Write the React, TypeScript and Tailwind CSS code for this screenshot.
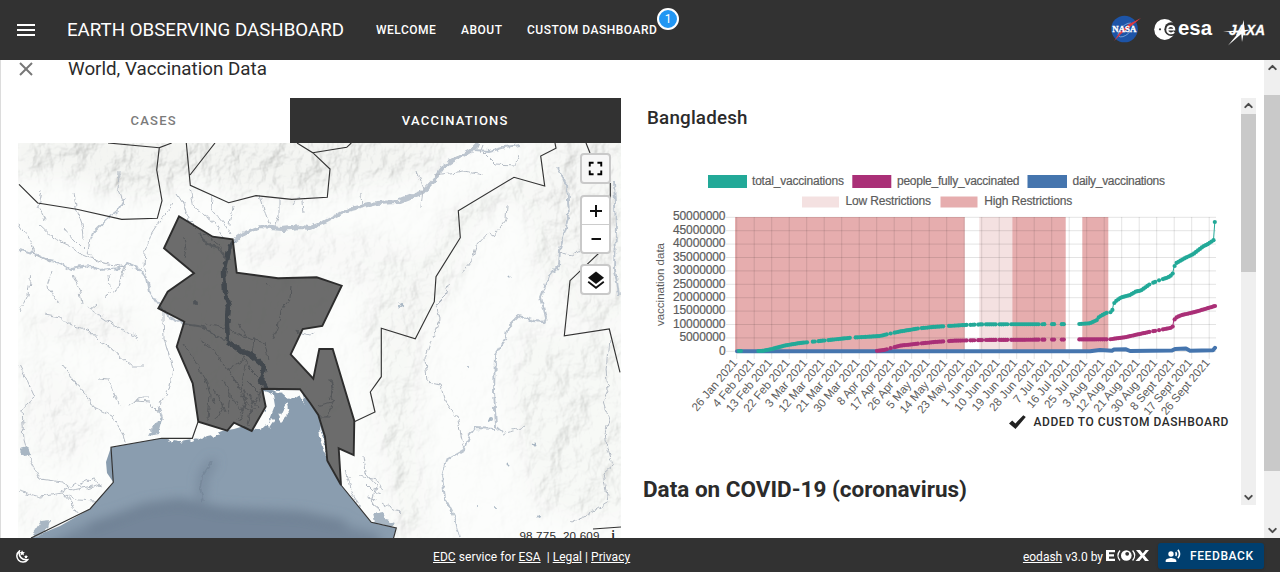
import { ReactNode } from "react";
import { X, ChevronUp, ChevronDown } from "lucide-react";
import { MdFullscreen, MdRecordVoiceOver } from "react-icons/md";

type Point = [number, number];

const COUNTRY =
  "M179 216.3 212.7 236.7 232.7 239.3 236.7 272.7 278 278.3 316.7 277.3 341.7 285.7 322.3 326 302.7 329 290.7 354.3 313.3 378.7 319.3 349 332.7 349 354.3 421 353.7 455 338.7 448.3 341 485 327.3 460.7 325 436.7 318.3 415 310 402.7 300 389.3 262 388.7 265.7 406.7 251.7 431 234 422.7 227.3 430.7 198.3 421.7 192.7 383.3 176.7 346.7 184.3 321.7 158.3 308.3 167.7 291.7 194 273.3 164 248.3Z";

const BORDERS = [
  "M19 184.3 37.7 203 76.7 209.3 121.7 219.3 157.3 218.3 162 200.7 156.7 170 159.3 147.7 171.7 143M108 143 159.3 147.7",
  "M186.3 143 190.3 185.3 228.7 202.7 256 195.7 291.7 199.3 327.3 197.3 330 169 312.7 152.7 297 143M215 143 190 175M312.7 152.7 346.7 147.3 351.3 143",
  "M555 143 556 148.3 540.7 156 544.7 186 514 177.3 458.3 210.7 460.3 237.7 436 276.7 434.3 301.7 415.3 338.7 381.3 328.3 381.3 376.7 370.3 392 375 412 354.3 421.7",
  "M586 143 590 153M610.3 183V241.7L598.7 253.3 570 280.7 564.3 335.7 609.3 329 620 372.3",
  "M198 422 192.3 438.3 161.7 438.3 111 447.3 113.3 482.3 90 509 31 538",
  "M341 485 371.3 522.3 396.3 528 393.3 539M593 529 621 527",
];

const WIDE_RIVERS = [
  "M478 143 472 150 456 159 443 167 434 180 423 192 398 202 377 203 347 210 325 222 310 228 300 227 282 229 260 227 245 233 234 240 230 246 224 273 225 292 229 307 227 325 228 342 240 350 254 357 264 366 261 380 266 389",
];
const MID_RIVERS = [
  "M19 250 33 253 50 261 60 263 70 269 90 266 100 270 120 268 127 264 139 269 147 278 150 292 158 304 170 318 185 324 203 327 220 338 228 342",
  "M473 150 490 151 505 147 520 145M125 198 118 211 106 220 95 231 90 238",
  "M505 340 495 355 494 392 496 426 503 432M496 429 475 428 470 435 465 449 446 460 442 476 445 498 455 518 460 538",
  "M505 340 508 327 519 316 535 321 544 322 546 318 541 297 549 276 559 265 560 250 569 215 567 185 557 168",
  "M614 180 616 230 615 270 619 295",
  "M200 233 206 243 218 248 226 260M150 430 162 418 159 408",
];
const RIVERS = [
  "M41 190 38 207 45 220M74 193 76 207 83 228 84 239M119 172 118 190 124 205M90 238 88 252 94 260 109 264 126 267M173 203 162 218 151 235 145 252 144 266 148 280",
  "M19 224 31 243 34 254 50 262M39 224 55 239 70 246 80 254 95 260M64 228 74 240 84 250",
  "M177 194 184 205 188 219 197 228M190 188 194 208 214 222 224 238M212 197 211 208 224 224 231 235M233 207 230 225M260 195 264 210 270 225M279 198 279 215 275 226M303 200 304 214M293 205 299 196",
  "M52 272 47 286 56 300 60 303M31 275 28 294 20 311M73 275 80 292 82 304M125 267 119 287 104 296M97 304 90 310M109 275 110 288M44 315 60 318 72 325 90 331 98 340M87 307 102 317 118 328 138 338",
  "M163 308 163 318 164 338 173 369 169 390 160 403 158 413 152 407 150 401 135 400M100 341 113 350 132 366 145 366M62 365 80 388 94 407 112 416 122 432 125 442M99 378 108 379 115 397 119 405M129 404 142 397 148 397M19 365 28 382 35 398 22 409 24 440 29 457 40 479 62 482 72 490 92 486",
  "M19 491 40 497 62 493 78 500 96 501M62 492 76 483 88 489 101 485M80 483 94 478 100 487M64 494 72 503 77 514",
  "M421 206 423 190 416 171M434 175 450 173 463 171 483 175M483 152 495 164 515 165 519 155M361 194 362 208",
  "M507 206 506 220 494 236 488 232 477 244 471 262 461 274M449 283 445 296 436 305 440 319 432 337",
  "M431 340 425 359 427 381 440 384 445 401 457 417 462 440 465 448M560 251 571 255 580 250",
  "M609 340 606 370 608 390 603 401 609 420 605 433 607 447 613 465 603 474 608 502 588 515 571 523M503 434 516 430 524 426M480 153 483 145",
  "M272 340 278 328 281 310 290 299 291 285M266 282 271 288M296 331 310 335 315 332M184 237 186 249 184 259M204 233 220 246 225 258",
  "M184 344 195 362 205 379 210 394 208 421M200 340 214 350 228 370 240 389 245 403 238 420M245 365 241 388 249 395 257 407M222 379 230 394 228 414M228 370 241 362 247 350M262 388 252 407 248 425M214 389 223 405 216 418M206 324 229 329 243 337 265 343 268 360M239 323 247 338M254 337 252 356M317 406 333 402 331 378M319 417 330 417M326 417 334 401",
  "M346 470 353 495 361 508M363 456 365 473 376 485 372 503 380 510M360 476 377 480 382 490M382 502 393 510 401 512M243 390 246 402 256 410M241 354 250 369 262 381M233 374 239 389",
  "M240 395 247 398 244 408 252 412M236 401 243 412 240 422M249 383 258 392 260 402M330 380 334 390 330 398 335 402M212 398 216 405M222 402 225 412M231 396 236 406M366 484 374 492 381 494M368 498 376 500",
];

const SEA =
  "M31 538 60 526 90 509 113.3 482.3 107 473 106 462 111 447.3 161.7 438.3 180 441 198 438 212 435 222 431 234 429 244 426 252 430 258 425 264 414 266 405 262 389 300 389 318 415 325 437 327 461 341 485 371 522 396 528 393 540Z";

const LAND_PATCHES = [
  "M265 391 273 394 275 406 268 424 259 430 253 428 264 411Z",
  "M271 390 302 390 305 404 299 394 290 400 282 393Z",
  "M287 403 289 414 281 422 278 419 283 409Z",
  "M198 422 207 426 217 429 214 438 207 432 199 440 196 434 192 438Z",
  "M162 438 168 438 171 443 176 438 181 443 185 438 192 442 195 437 203 439 209 434 220 435 212 425 198 422 185 429 168 429Z",
  "M319 426 324 441 328 461 323 450 320 438Z",
  "M268 424 272 418 275 421 269 430Z",
];

const MOUNTAINS: ReactNode = (
  <>
    <path d="M10 130H330L400 130 430 165 360 185 330 195 240 195 190 175 160 195 120 195 70 175 10 178Z" />
    <path d="M395 130H470L430 170 395 185 330 185 330 150Z" opacity=".8" />
    <path d="M520 130H630V320H570L555 265 535 290 530 210 500 200 470 235 445 300 405 350 380 310 425 260 455 205 540 165Z" opacity=".7" />
    <path d="M360 310 420 330 420 440 430 538H400L375 430Z" opacity=".6" />
    <path d="M520 330H630V520H570L530 500 510 400Z" opacity=".6" />
    <path d="M235 240 320 230 400 240 430 260 380 310 340 275 280 270 245 265Z" opacity=".45" />
    <path d="M25 365 65 365 98 420 85 465 45 465 22 430ZM20 320 90 300 150 325 130 350 40 340ZM18 500 60 505 40 530H18Z" opacity=".4" />
  </>
);

function MapView() {
  return (
    <svg viewBox="18 143 603 395" className="absolute inset-0 h-full w-full">
      <defs>
        <filter id="relief" x="0" y="0" width="100%" height="100%">
          <feTurbulence type="fractalNoise" baseFrequency="0.035 0.028" numOctaves="5" seed="8" />
          <feDiffuseLighting lightingColor="#ffffff" surfaceScale="9" diffuseConstant="1.08">
            <feDistantLight azimuth="215" elevation="60" />
          </feDiffuseLighting>
          <feColorMatrix values=".33 .33 .33 0 0 .33 .33 .33 0 0 .33 .33 .33 0 0 0 0 0 1 0" />
        </filter>
        <filter id="soft" x="-20%" y="-20%" width="140%" height="140%">
          <feGaussianBlur stdDeviation="10" />
        </filter>
        <filter id="blur" x="-20%" y="-40%" width="140%" height="180%">
          <feGaussianBlur stdDeviation="6" />
        </filter>
        <filter id="wiggle" x="-5%" y="-5%" width="110%" height="110%">
          <feTurbulence type="fractalNoise" baseFrequency="0.16" numOctaves="2" seed="3" />
          <feDisplacementMap in="SourceGraphic" scale="6" xChannelSelector="R" yChannelSelector="G" />
        </filter>
        <mask id="hills" maskUnits="userSpaceOnUse" x="18" y="143" width="603" height="395">
          <rect x="18" y="143" width="603" height="395" fill="#fff" opacity=".09" />
          <g fill="#fff" filter="url(#soft)">{MOUNTAINS}</g>
        </mask>
        <clipPath id="sea">
          <path d={SEA} />
        </clipPath>
      </defs>
      <rect x="18" y="143" width="603" height="395" fill="#fdfefd" />
      <g mask="url(#hills)">
        <rect x="18" y="143" width="603" height="395" fill="#eef0ec" />
        <rect x="18" y="143" width="603" height="395" filter="url(#relief)" opacity=".38" />
      </g>
      <path d={SEA} fill="#8a9daf" />
      <g clipPath="url(#sea)">
        <g filter="url(#blur)" fill="none">
          <path d="M45 545 90 523 145 506 185 501 240 512 320 518 380 535 380 560 45 560Z" fill="#74869a" />
          <path d="M214 460 203 475 201 500" stroke="#6c7d90" strokeWidth="5" />
          <path d="M90 528 145 507 180 502 220 511 300 515 345 524" stroke="#66778a" strokeWidth="5" />
        </g>
        <path d="M212 461 202 477 200 488 203 501" fill="none" stroke="#6c7c8f" strokeWidth="1.6" opacity=".45" filter="url(#wiggle)" />
      </g>
      <g fill="#fbfcfb" filter="url(#wiggle)">
        {LAND_PATCHES.map((d) => (
          <path key={d} d={d} />
        ))}
      </g>
      <g fill="none" stroke="#bcc5cf" strokeLinejoin="round" filter="url(#wiggle)">
        {WIDE_RIVERS.map((d) => (
          <path key={d} d={d} strokeWidth="4" />
        ))}
        {MID_RIVERS.map((d) => (
          <path key={d} d={d} strokeWidth="1.9" />
        ))}
        {RIVERS.map((d) => (
          <path key={d} d={d} strokeWidth="1" stroke="#b5bcc5" />
        ))}
        <path d="M234 241 230 246 224 273 225 292 229 307 227 325 228 342 240 350 254 357 264 366 261 380 266 389" strokeWidth="4.5" stroke="#8596a6" />
      </g>
      <g fill="#a8b6c3" filter="url(#wiggle)">
        <path d="M20 449 28 447 31 455 24 456ZM33 533 41 521 50 520 48 528 36 538ZM372 514 383 512 386 520 396 523 390 528 374 522ZM148 436 157 420 162 418 158 434Z" />
        <circle cx="401" cy="305" r="2" />
        <circle cx="491" cy="420" r="2" />
        <circle cx="534" cy="444" r="1.5" />
        <circle cx="509" cy="464" r="1.5" />
        <circle cx="538" cy="516" r="2" />
        <circle cx="196" cy="304" r="2" />
        <circle cx="510" cy="277" r="1.5" />
        <circle cx="468" cy="366" r="1" />
        <circle cx="495" cy="507" r="1" />
        <circle cx="478" cy="507" r="1" />
      </g>
      <g fill="none" stroke="#333" strokeWidth="1.15">
        {BORDERS.map((d) => (
          <path key={d} d={d} />
        ))}
      </g>
      <path d={COUNTRY} fill="#1e1e1e" fillOpacity=".65" stroke="#2d2d2d" strokeWidth="1.9" />
    </svg>
  );
}

const LABELS = [
  "26 Jan", "4 Feb", "13 Feb", "22 Feb", "3 Mar", "12 Mar", "21 Mar", "30 Mar", "8 Apr", "17 Apr",
  "26 Apr", "5 May", "14 May", "23 May", "1 Jun", "10 Jun", "19 Jun", "28 Jun", "7 Jul", "16 Jul",
  "25 Jul", "3 Aug", "12 Aug", "21 Aug", "30 Aug", "8 Sept", "17 Sept", "26 Sept",
];

const TOTAL: Point[] = [
  [737, 351], [762, 351], [772, 349], [785, 345.5], [800, 343], [820, 341], [850, 337.8], [880, 336],
  [886, 334.5], [900, 331.5], [918, 328.5], [935, 326.8], [965, 325], [985, 324.3], [1063, 324.2],
  [1079, 324], [1090, 323.3], [1097, 320], [1099, 317], [1106, 313], [1112, 312], [1113.5, 304],
  [1116, 301], [1121, 297.5], [1130, 295], [1136, 291.5], [1141, 290.5], [1150, 284], [1160, 280],
  [1168, 277.5], [1172.5, 274.5], [1174, 267], [1176.5, 263], [1185, 258], [1193, 254.3],
  [1203, 246.5], [1208, 244], [1213.8, 240], [1214.8, 222],
];
const FULL: Point[] = [
  [876, 351], [884, 350], [900, 345.7], [915, 344], [935, 342], [955, 340.7], [985, 340], [1110, 339.3],
  [1125, 337.3], [1136, 334.8], [1150, 331.8], [1160, 330], [1172.5, 327.5], [1174, 320], [1177, 317],
  [1182, 315], [1195, 312], [1205, 309], [1215, 306],
];
const DAILY: Point[] = [
  [737, 351.3], [1090, 351.3], [1100, 350], [1112, 350.7], [1114, 349.5], [1126, 349.3], [1130, 351],
  [1172, 350.6], [1175, 349], [1186, 348.6], [1190, 350.7], [1213, 350.2], [1215, 347.8],
];
const GAPS: Point[] = [
  [742, 758], [808, 811.5], [815, 818], [825, 828], [851.5, 855], [887, 889], [892, 894], [918.5, 921],
  [944, 948.5], [968, 970], [975, 976.5], [983, 985], [996, 998], [1009, 1011], [1039, 1042],
  [1045, 1047], [1048, 1052], [1054.5, 1061], [1064, 1078], [1107, 1109.5], [1149.5, 1153],
  [1156, 1157.5], [1161, 1162.5], [1177, 1178.5],
];

function sample(series: Point[]): Point[] {
  const out: Point[] = [];
  for (let x = 737; x <= 1213.8; x += 1.945) {
    if (GAPS.some(([a, b]) => x > a && x < b)) continue;
    const i = series.findIndex((p) => p[0] >= x);
    if (i <= 0) continue;
    const [a, b] = [series[i - 1], series[i]];
    out.push([x, a[1] + ((b[1] - a[1]) * (x - a[0])) / (b[0] - a[0])]);
  }
  out.push(series[series.length - 1]);
  return out;
}

function Series({ data, color }: { data: Point[]; color: string }) {
  return (
    <g fill={color}>
      {sample(data).map(([x, y]) => (
        <circle key={x} cx={x} cy={y} r="2.1" />
      ))}
    </g>
  );
}

const LEGEND = [
  { x: 708, y: 175, w: 39, h: 13, color: "#22a998", tx: 752, ty: 184.5, tw: 92, text: "total_vaccinations" },
  { x: 852.3, y: 175, w: 39, h: 13, color: "#aa2f77", tx: 897, ty: 184.5, tw: 122.5, text: "people_fully_vaccinated" },
  { x: 1027.5, y: 175, w: 39.5, h: 13, color: "#4575ae", tx: 1072.5, ty: 184.5, tw: 92.5, text: "daily_vaccinations" },
  { x: 802, y: 196.5, w: 37, h: 11, color: "#f4e1e1", tx: 845.5, ty: 205, tw: 85.5, text: "Low Restrictions" },
  { x: 940.5, y: 196.5, w: 37, h: 11, color: "#e6adae", tx: 984.3, ty: 205, tw: 88, text: "High Restrictions" },
];

function Chart() {
  return (
    <svg viewBox="643 165 585 247" className="block h-[247px] w-[585px] overflow-visible" fontFamily="Liberation Sans, Arial, sans-serif" fontSize="12" fill="#5c5c5c">
      {LEGEND.map((l) => (
        <g key={l.text}>
          <rect x={l.x} y={l.y} width={l.w} height={l.h} fill={l.color} />
          <text x={l.tx} y={l.ty} textLength={l.tw} stroke="#5c5c5c" strokeWidth=".2">{l.text}</text>
        </g>
      ))}
      <rect x="735" y="217" width="229.7" height="134.3" fill="#e6adae" />
      <rect x="979.3" y="217" width="33" height="134.3" fill="#f4e1e1" />
      <rect x="1012.3" y="217" width="53.4" height="134.3" fill="#e6adae" />
      <rect x="1082.3" y="217" width="26" height="134.3" fill="#e6adae" />
      <g stroke="#000" strokeOpacity=".11">
        {Array.from({ length: 11 }, (_, i) => (
          <path key={i} d={`M726 ${217.3 + i * 13.4}H1216`} />
        ))}
        {LABELS.map((l, i) => (
          <path key={l} d={`M${736.7 + i * 17.5} 217V359`} />
        ))}
      </g>
      {Array.from({ length: 11 }, (_, i) => (
        <text key={i} x={i === 10 ? 719 : i === 9 ? 679.5 : 673} y={220.3 + i * 13.45} textLength={i === 10 ? 6.5 : i === 9 ? 46 : 52.5} stroke="#5c5c5c" strokeWidth=".2">
          {String(50000000 - i * 5000000)}
        </text>
      ))}
      <text transform="translate(663.5 326) rotate(-90)" textLength="83" fontSize="11.5">vaccination data</text>
      {LABELS.map((l, i) => (
        <text key={l} transform={`translate(${738 + i * 17.5} 363) rotate(-50)`} textAnchor="end" fontSize="11.6">
          {l + " 2021"}
        </text>
      ))}
      <path d={"M" + DAILY.map((p) => p.join(" ")).join("L")} fill="none" stroke="#4575ae" strokeWidth="4" strokeLinecap="round" strokeLinejoin="round" />
      <path d="M1172.5 327.5 1174 319" stroke="#aa2f77" />
      <path d="M1112 312 1113.5 304M1172.5 274 1174 267M1213.5 240 1214.8 222" stroke="#22a998" fill="none" />
      <Series data={FULL} color="#aa2f77" />
      <Series data={TOTAL} color="#22a998" />
    </svg>
  );
}

function Logos() {
  return (
    <svg viewBox="1108 10 160 38" className="h-[38px] w-[160px]" fontFamily="Liberation Sans, sans-serif">
      <circle cx="1124.5" cy="28" r="13.3" fill="#1d54a7" />
      <ellipse cx="1125.5" cy="29" rx="9" ry="4.5" transform="rotate(-42 1125.5 29)" fill="none" stroke="#8fb4e3" strokeWidth=".7" />
      <path d="M1141 17 1129 23 1120 31 1114 40 1121 33 1130 26Z" fill="#dc3a40" />
      <text x="1112.3" y="31.2" fontFamily="Liberation Serif, serif" fontWeight="700" fontSize="9" fill="#fff" stroke="#fff" strokeWidth=".3" textLength="24" lengthAdjust="spacingAndGlyphs">NASA</text>
      <circle cx="1164.7" cy="28.4" r="10.5" fill="#fff" />
      <circle cx="1171.2" cy="28.2" r="6.9" fill="#323232" />
      <path d="M1167.3 28.6H1174.3C1174.3 23.9 1167.6 23.8 1167.2 28.6 1167.2 32.8 1172 33.3 1174.2 31" fill="none" stroke="#fff" strokeWidth="1.9" />
      <circle cx="1160" cy="28.3" r="1.1" fill="#323232" />
      <text x="1178" y="34.3" fontWeight="700" fontSize="20" fill="#fff" textLength="34" lengthAdjust="spacingAndGlyphs">esa</text>
      <text x="1229" y="34" fontWeight="700" fontStyle="italic" fontSize="15.5" fill="#fff" stroke="#fff" strokeWidth=".3" textLength="36" lengthAdjust="spacingAndGlyphs">JAXA</text>
      <path d="M1223 30.3 1240 29.6 1251 28.6 1243 31.5 1228 44.5 1238.5 31.8ZM1243.8 19 1244.3 29 1242 41 1240.8 29Z" fill="#fff" />
    </svg>
  );
}

function Scrollbar({ className, children }: { className: string; children: ReactNode }) {
  return (
    <div className={"flex shrink-0 flex-col items-center bg-[#efefef] text-[#4b4b4b] " + className}>
      <ChevronUp size={13} strokeWidth={3.6} className="mt-[1px] shrink-0" />
      {children}
      <ChevronDown size={13} strokeWidth={3.6} className="mt-auto mb-[1px] shrink-0" />
    </div>
  );
}

export default function App() {
  return (
    <div className="flex h-[572px] w-[1280px] flex-col overflow-hidden bg-white font-['Roboto',sans-serif] text-[#2b2b2b]">
      <header className="flex h-[60px] shrink-0 items-center bg-[#323232] text-white">
        <svg viewBox="0 0 18 12" className="ml-[17px] h-3 w-[18px] shrink-0"><path d="M0 1H18M0 6H18M0 11H18" stroke="#fff" strokeWidth="2" /></svg>
        <h1 className="ml-[32px] w-[309px] text-[18.7px] font-normal whitespace-nowrap">EARTH OBSERVING DASHBOARD</h1>
        <nav className="flex text-[12px] font-medium tracking-[0.5px] whitespace-nowrap">
          <span className="w-[85px]">WELCOME</span>
          <span className="w-[66px]">ABOUT</span>
          <span className="relative">
            CUSTOM DASHBOARD
            <span className="absolute -top-[13px] left-[130px] flex h-[22px] w-[22px] items-center justify-center rounded-full border-2 border-white bg-[#2196f3] text-[12px] font-normal tracking-normal">1</span>
          </span>
        </nav>
        <div className="mr-[12px] ml-auto"><Logos /></div>
      </header>

      <div className="flex h-[478px] shrink-0">
        <main className="flex min-w-0 flex-1 flex-col border-l border-[#dcdcdc]">
          <div className="flex h-[38px] shrink-0 items-start">
            <X size={24} strokeWidth={2} className="-mt-[3px] ml-[13px] text-[#777] [&_path]:[stroke-linecap:butt]" />
            <h2 className="-mt-[5px] ml-[30px] text-[18.8px] leading-7 whitespace-nowrap">World, Vaccination Data</h2>
          </div>
          <div className="flex min-h-0 flex-1">
            <section className="ml-[17px] flex w-[603px] shrink-0 flex-col">
              <div className="flex h-[45px] shrink-0 text-[13px] font-medium tracking-[1.25px]">
                <div className="flex w-[271.5px] items-center justify-center pt-px text-[#7b7b7b]">CASES</div>
                <div className="flex flex-1 items-center justify-center bg-[#323232] pt-px text-white">VACCINATIONS</div>
              </div>
              <div className="relative min-h-0 flex-1 overflow-hidden">
                <MapView />
                <div className="absolute top-[10px] right-[10px] flex w-[31px] flex-col text-black">
                  <div className="flex h-[31px] items-center justify-center rounded-[4px] border-2 border-[#c9c9c9] bg-[#f7f7f7]"><MdFullscreen size={23} className="shrink-0" /></div>
                  <div className="mt-[11px] flex h-[59px] flex-col rounded-[4px] border-2 border-[#c9c9c9] bg-white">
                    <div className="flex flex-1 items-center justify-center border-b border-[#ccc]">
                      <svg viewBox="0 0 12 12" className="h-3 w-3"><path d="M0 6H12M6 0V12" stroke="#111" strokeWidth="2" /></svg>
                    </div>
                    <div className="flex flex-1 items-center justify-center">
                      <svg viewBox="0 0 12 12" className="h-3 w-3"><path d="M1.5 6H11" stroke="#111" strokeWidth="2" /></svg>
                    </div>
                  </div>
                  <div className="mt-[10px] flex h-[31px] items-center justify-center rounded-[4px] border-2 border-[#c9c9c9] bg-white">
                    <svg viewBox="0 0 18 18" className="h-[18px] w-[18px]"><path d="M9 .5 17 6.7 9 13 1 6.7Z" fill="#111" /><path d="M1.2 10.8 9 16.8 16.8 10.8" fill="none" stroke="#111" strokeWidth="1.8" /></svg>
                  </div>
                </div>
                <div className="absolute right-[6px] -bottom-[6px] flex gap-3 font-['Liberation_Sans',sans-serif] text-[11.6px] leading-4 tracking-[0.2px] whitespace-pre">
                  <span>98.775, 20.609</span>
                  <b className="font-['Liberation_Serif',serif]">i</b>
                </div>
              </div>
            </section>
            <section className="ml-[22px] flex h-[407px] flex-1 flex-col">
              <h3 className="mt-[6px] ml-1 h-[61px] text-[18.8px] leading-7 font-medium tracking-[0.2px]">Bangladesh</h3>
              <Chart />
              <div className="flex h-[20px] items-center justify-end gap-[7px] pr-[12px] text-[12px] font-medium tracking-[0.55px] whitespace-nowrap">
                <svg viewBox="0 0 19 16" className="h-4 w-[19px]"><path d="M1 9.5 4.2 6.5 7.4 9.5 15.3 1.2 17.8 3 7.5 15Z" fill="#222" /></svg>
                ADDED TO CUSTOM DASHBOARD
              </div>
              <h2 className="mt-[41px] text-[22.5px] leading-8 font-bold whitespace-nowrap">Data on COVID-19 (coronavirus)</h2>
            </section>
            <Scrollbar className="mr-2 h-[407px] w-[15px]">
              <div className="mt-[2px] h-[158px] w-full shrink-0 bg-[#c9c9c9]" />
            </Scrollbar>
          </div>
        </main>
        <Scrollbar className="h-[478px] w-4">
          <div className="mt-[21px] h-[376px] w-full shrink-0 bg-[#c9c9c9]" />
        </Scrollbar>
      </div>

      <footer className="flex h-[34px] shrink-0 items-center bg-[#323232] text-[12px] whitespace-pre text-white">
        <div className="w-[433px] pt-1 pl-[15px]">
          <svg viewBox="0 0 14 14" className="h-[14px] w-[14px]"><path d="M4.3 1.2A6 6 0 1 0 12.6 9.7C6.7 10.5 3.4 6.2 4.3 1.2Z" fill="none" stroke="#fff" strokeWidth="1.5" /><path d="M7 .3 8 2 9.9 2.2 8.6 3.6 8.9 5.5 7.2 4.6 5.5 5.4 5.8 3.6 4.5 2.3 6.3 2ZM11 4.7 11.7 6 13 6.3 12 7.2 12.1 8.5 11 8 9.8 8.5 10 7.2 9.1 6.2 10.4 6Z" fill="#fff" /></svg>
        </div>
        <div className="flex-1 pt-1 tracking-[0.06px]"><u>EDC</u> service for <u>ESA</u>{"  | "}<u>Legal</u>{" | "}<u>Privacy</u></div>
        <div className="pt-1"><u>eodash</u> v3.0 by</div>
        <svg viewBox="0 0 43 13" className="ml-[3px] h-[13px] w-[43px]">
          <path d="M0 1H9V3.2H3V5.3H8V7.4H3V9.7H9V12H0ZM30 1H34L36.8 4.5 39.6 1H43L38.4 6.4 43 12H39L36.4 8.5 33.4 12H29.5L34.6 6.4Z" fill="#fff" />
          <circle cx="20.3" cy="6.5" r="5.3" fill="#fff" />
          <circle cx="21.2" cy="4.8" r="1.9" fill="#323232" />
          <path d="M14 1.5Q9.8 6.5 14 11.5M26.6 1.5Q30.8 6.5 26.6 11.5" fill="none" stroke="#fff" strokeWidth="1.3" />
        </svg>
        <div className="mt-[2px] mr-[16px] ml-[9px] flex h-[26px] w-[106px] items-center rounded-[3px] bg-[#003f6f] pl-[7px] text-[12px] font-medium tracking-[0.6px] shadow">
          <MdRecordVoiceOver size={16} className="mr-[9px]" />FEEDBACK
        </div>
      </footer>
    </div>
  );
}
